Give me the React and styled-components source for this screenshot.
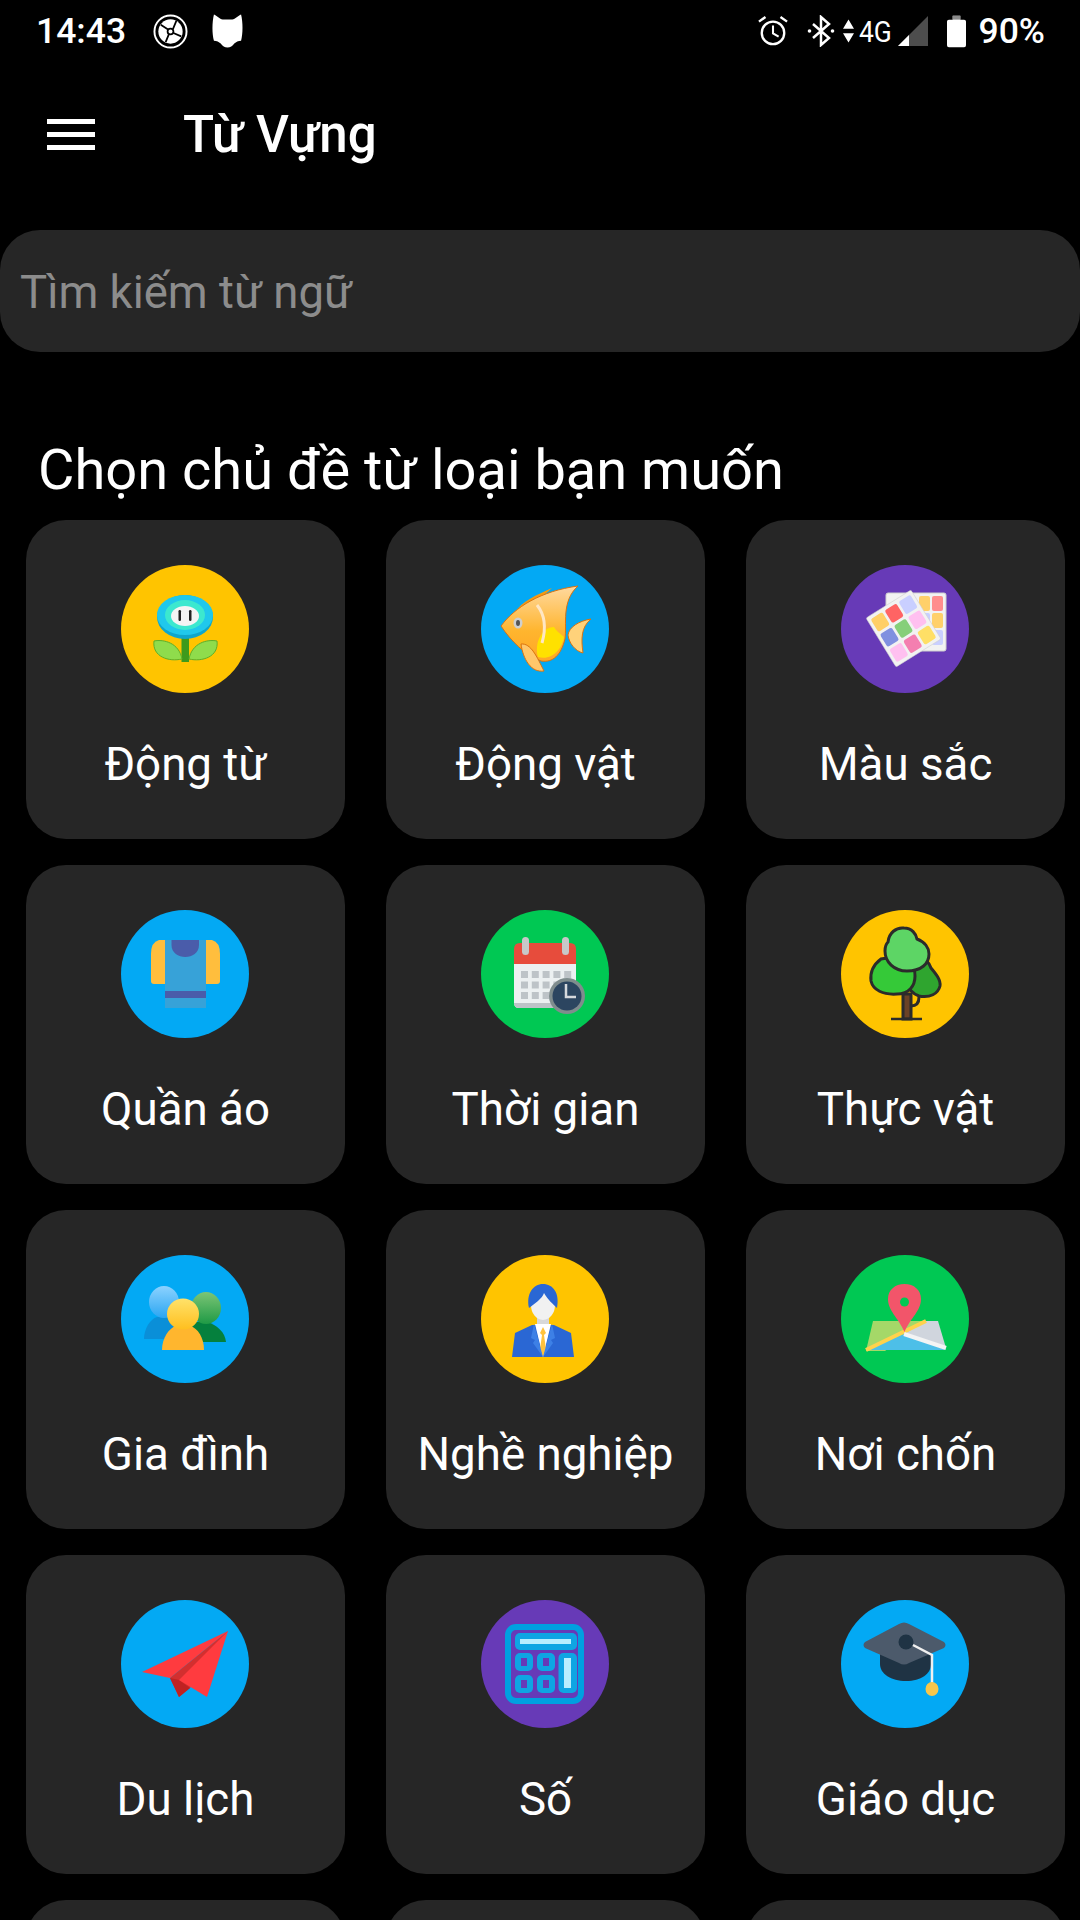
import styled, { createGlobalStyle } from "styled-components";

const GlobalStyle = createGlobalStyle`
  html, body {
    margin: 0;
    padding: 0;
    background: #000;
  }
  * {
    box-sizing: border-box;
  }
`;

const Screen = styled.div`
  width: 1080px;
  height: 1920px;
  overflow: hidden;
  background: #000;
  color: #fff;
  font-family: Roboto, "Liberation Sans", sans-serif;
`;

const StatusBar = styled.div`
  height: 62px;
  display: flex;
  align-items: center;
  padding: 0 35px 0 36px;
`;

const StatusTime = styled.span`
  font-size: 35.5px;
  font-weight: 500;
  width: 117px;
`;

const StatusIcon = styled.span`
  display: flex;
  margin-left: ${(p) => p.$left || 0}px;
`;

const Spacer = styled.div`
  flex: 1;
`;

const NetworkLabel = styled.span`
  width: 33px;
  margin: 0 6px 0 5px;
  font-size: 30px;
  transform: scaleX(0.88);
  transform-origin: left center;
  white-space: nowrap;
`;

const BatteryLabel = styled.span`
  font-size: 35.5px;
  font-weight: 500;
  margin-left: 13px;
`;

const Toolbar = styled.div`
  height: 144px;
  display: flex;
  align-items: center;
  padding-left: 47px;
`;

const MenuIcon = styled.div`
  width: 48px;
  display: flex;
  flex-direction: column;
  gap: 8px;
  margin-right: 88px;

  span {
    height: 5px;
    background: #fff;
  }
`;

const Title = styled.h1`
  margin: 0;
  font-size: 51px;
  font-weight: 500;
`;

const SearchBox = styled.div`
  height: 122px;
  margin-top: 24px;
  padding: 3px 0 0 20px;
  display: flex;
  align-items: center;
  background: #262626;
  border-radius: 40px;
  color: #8c8c8c;
  font-size: 45.5px;
`;

const Heading = styled.h2`
  margin: 0;
  height: 168px;
  padding: 88px 0 0 38px;
  font-size: 56px;
  line-height: 61px;
  font-weight: 400;
`;

const CategoryGrid = styled.div`
  display: grid;
  grid-template-columns: repeat(3, 319px);
  grid-auto-rows: 319px;
  column-gap: 41px;
  row-gap: 26px;
  padding-left: 26px;
`;

const Card = styled.div`
  background: #262626;
  border-radius: 40px;
  padding-top: 45px;
  display: flex;
  flex-direction: column;
  align-items: center;
`;

const Circle = styled.div`
  width: 128px;
  height: 128px;
  margin-left: -1px;
  border-radius: 50%;
  background: ${(p) => p.$color};
  overflow: hidden;

  svg {
    display: block;
  }
`;

const Label = styled.span`
  margin-top: 47px;
  font-size: 45.7px;
  line-height: 50px;
  white-space: nowrap;
`;

const yellow = "#ffc400";
const blue = "#03a9f4";
const purple = "#673ab7";
const green = "#00c853";

const Flower = () => (
  <>
    <rect x="60.5" y="70" width="7.5" height="27" fill="#3e9a1c" />
    <path d="M33 76c10-2 25 2 28 18-13 3-30-2-28-18z" fill="#8fdc4c" stroke="#5dae2a" />
    <path d="M96 76c-10-2-25 2-28 18 13 3 30-2 28-18z" fill="#8fdc4c" stroke="#5dae2a" />
    <ellipse cx="64" cy="52" rx="28" ry="22" fill="#0fa6cc" />
    <ellipse cx="64" cy="50" rx="28" ry="20" fill="#20c8ec" />
    <ellipse cx="64" cy="50" rx="20" ry="15" fill="#3ce8cf" />
    <ellipse cx="64" cy="51" rx="14" ry="10" fill="#f4f4f4" />
    <rect x="57.5" y="45" width="2.5" height="11" rx="1.2" fill="#222" />
    <rect x="68" y="45" width="2.5" height="11" rx="1.2" fill="#222" />
  </>
);

const Fish = () => (
  <>
    <defs>
      <linearGradient id="fishBody" x1="0" y1="0" x2="0" y2="1">
        <stop offset="0" stopColor="#ffd9a0" />
        <stop offset="0.6" stopColor="#ffb52e" />
        <stop offset="1" stopColor="#ffa726" />
      </linearGradient>
    </defs>
    <path d="M34 48c6-12 22-18 37-25-9 9-21 15-25 21z" fill="#f59a12" />
    <path d="M87 70c1-8 11-14 23-16-10 8-10 20-8 34-8-2-14-10-15-18z" fill="#ffd27a" stroke="#d9730f" />
    <path d="M20 61C34 42 60 26 97 21 80 36 86 60 84 74c-4 16-12 24-24 22C44 90 30 76 20 61z" fill="url(#fishBody)" stroke="#d9730f" />
    <path d="M57 92c-4-14 4-30 16-30 2 4 8 8 10 10-2 12-12 24-26 20z" fill="#ffe100" />
    <path d="M56 40c8 10 9 24 5 38" fill="none" stroke="#ffe6c4" strokeWidth="3" />
    <path d="M40 79c10-1 16 13 23 27-13 2-21-12-23-27z" fill="#ffc76a" stroke="#d9730f" />
    <ellipse cx="37" cy="58" rx="4.5" ry="5.5" fill="#cfcfcf" />
    <ellipse cx="37" cy="58" rx="2" ry="3" fill="#555" />
  </>
);

const backColors = ["#ffd06a", "#ff8d8d", "#c9cfff", "#ffd06a", "#ffc6f2", "#c9cfff"];
const frontColors = ["#ffcf66", "#ff6464", "#c9cfff", "#8090e0", "#86cf7a", "#ffc0f0", "#ffc0f0", "#f47fb0", "#ffdf66"];

const Swatches = () => (
  <>
    <rect x="45" y="28" width="60" height="58" rx="2" fill="#f2f2f2" stroke="#cfcfcf" />
    {backColors.map((c, i) => (
      <rect key={i} x={78 + (i % 2) * 13} y={31 + Math.floor(i / 2) * 17} width="11" height="15" rx="2" fill={c} />
    ))}
    <g transform="matrix(0.45 -0.28 0.30 0.49 25 53)">
      <rect width="100" height="100" rx="3" fill="#f2f2f2" stroke="#cfcfcf" />
      {frontColors.map((c, i) => (
        <rect key={i} x={6 + (i % 3) * 31} y={6 + Math.floor(i / 3) * 31} width="26" height="26" rx="4" fill={c} />
      ))}
    </g>
  </>
);

const Sweater = () => (
  <>
    <path d="M44 30H38q-8 2-8 14v27q0 3 3 3h63q3 0 3-3V44q0-12-8-14H44z" fill="#ffbe3d" />
    <rect x="44" y="30" width="41" height="68" fill="#37a2d8" />
    <path d="M50.5 30H78v5c0 16-27.5 16-27.5 0z" fill="#4a5caa" />
    <rect x="44" y="81" width="41" height="7" fill="#4a5caa" />
  </>
);

const calendarCells = [0, 1, 2].flatMap((row) => [0, 1, 2, 3, 4].map((col) => [col, row]));

const Calendar = () => (
  <>
    <path d="M33 54h62v39q0 5-5 5H38q-5 0-5-5z" fill="#ecf0f1" />
    <path d="M33 93h62q0 5-5 5H38q-5 0-5-5z" fill="#bdc3c7" />
    <path d="M33 54V39q0-6 6-6h50q6 0 6 6v15z" fill="#e74c3c" />
    <rect x="41" y="27" width="7" height="18" rx="3.5" fill="#c8c8c8" />
    <rect x="81" y="27" width="7" height="18" rx="3.5" fill="#c8c8c8" />
    {calendarCells.map(([col, row]) => (
      <rect key={`${col}-${row}`} x={40 + col * 10.8} y={61 + row * 10.5} width="7" height="7" fill="#bdc3c7" />
    ))}
    <circle cx="86" cy="86" r="18" fill="#7f8c8d" />
    <circle cx="86" cy="86" r="14.5" fill="#2c4560" />
    <path d="M85 74v13h10" fill="none" stroke="#d5d8dc" strokeWidth="2.5" />
  </>
);

const Tree = () => (
  <g stroke="#2b2b2b" strokeWidth="3">
    <path d="M62 84h8v25h-8z" fill="#6b4226" />
    <path d="M70 96c6 0 8-4 8-9" fill="none" />
    <path d="M50 109h31" strokeWidth="2.5" />
    <path d="M68 52c6-6 18-6 22 6 5 6 10 12 9 18-2 8-10 12-21 10-6-2-12-8-12-14z" fill="#2fa52f" />
    <path d="M40 49c-8 6-11 14-10 22 2 9 12 14 26 13 12 0 18-8 18-18 0-10-6-18-14-20z" fill="#35c938" />
    <path d="M47 32c1-9 8-15 16-14 8 0 12 6 13 11 8 3 12 9 12 15 0 10-8 17-22 17-13 0-22-9-22-20 0-3 1-7 3-9z" fill="#5dd565" />
  </g>
);

const Family = () => (
  <>
    <defs>
      <linearGradient id="famBlue" x1="0" y1="0" x2="0" y2="1">
        <stop offset="0" stopColor="#8cd2ff" />
        <stop offset="1" stopColor="#2ba6f2" />
      </linearGradient>
      <linearGradient id="famGreen" x1="0" y1="0" x2="0" y2="1">
        <stop offset="0" stopColor="#7cc576" />
        <stop offset="1" stopColor="#1f9a45" />
      </linearGradient>
      <linearGradient id="famYellow" x1="0" y1="0" x2="0" y2="1">
        <stop offset="0" stopColor="#ffe26a" />
        <stop offset="1" stopColor="#ffbf1f" />
      </linearGradient>
    </defs>
    <path d="M23 84c0-10 6-20 13-22h14c7 2 11 12 11 22z" fill="#0a8fd8" />
    <ellipse cx="43" cy="47" rx="15" ry="16" fill="url(#famBlue)" />
    <path d="M66 87V70l7-3h13c10 3 18 10 19 20z" fill="#05803d" />
    <ellipse cx="85" cy="53" rx="15" ry="16" fill="url(#famGreen)" />
    <path d="M41 95c0-12 7-22 14-24h14c8 2 14 12 14 24z" fill="#ffb62e" />
    <ellipse cx="62" cy="59" rx="16" ry="15.5" fill="url(#famYellow)" />
  </>
);

const Worker = () => (
  <>
    <rect x="56" y="56" width="12" height="18" fill="#d8d8d8" />
    <path d="M31 102l3-24 17-8h22l17 8 3 24z" fill="#2a67d4" />
    <path d="M54 69l8 33 8-33z" fill="#fff" />
    <path d="M62 72l3 6-2 2 2 14-3 8-3-8 2-14-2-2z" fill="#ffc23d" />
    <path d="M53 69l9 33-10-14 2-3-4-2z" fill="#3d80e6" />
    <path d="M71 69l-9 33 10-14-2-3 4-2z" fill="#3d80e6" />
    <ellipse cx="62" cy="50" rx="12" ry="15" fill="#f1f1f1" />
    <path d="M48 53c-3-14 4-24 14-24s17 9 14 24c-4-4-9-8-13-15-2 6-9 10-15 15z" fill="#2a67d4" />
  </>
);

const MapPin = () => (
  <>
    <path d="M25 96l7-30h53L44 96z" fill="#a5d868" />
    <path d="M85 66h12l8 27-42-14z" fill="#d0d5dd" />
    <path d="M63 79l42 16H25z" fill="#4dbfe8" />
    <path d="M25 95l60-29" stroke="#ffd24c" strokeWidth="4" fill="none" />
    <path d="M63 79l42 14" stroke="#f4f4f4" strokeWidth="4" fill="none" />
    <path d="M63.5 77C57 62 47 56 47 44c0-9 7-15 16.5-15S80 35 80 44c0 12-10 18-16.5 33z" fill="#f2556a" />
    <circle cx="63.5" cy="47" r="4.5" fill={green} />
  </>
);

const Plane = () => (
  <>
    <path d="M107 31L21 72l28 6z" fill="#ff3b3f" />
    <path d="M107 31L49 78l9 19 11-9z" fill="#d32f2f" />
    <path d="M49 78l9 19 11-9-11-8z" fill="#bf2222" />
    <path d="M107 31L58 80l28 17z" fill="#ff3b3f" />
  </>
);

const calcKeys = [
  [34, 53],
  [56, 53],
  [34, 75],
  [56, 75],
];

const Calculator = () => (
  <>
    <rect x="27" y="27" width="73" height="74" rx="8" fill="none" stroke="#00a0e0" strokeWidth="6" />
    <rect x="34" y="33" width="62" height="17" rx="5" fill="#0ea5e3" />
    <rect x="39" y="39" width="51" height="5" fill="#b8eeff" />
    {calcKeys.map(([x, y]) => (
      <g key={`${x}-${y}`}>
        <rect x={x} y={y} width="18" height="18" rx="5" fill="#0ea5e3" />
        <rect x={x + 6} y={y + 5} width="6" height="8" fill={purple} />
      </g>
    ))}
    <rect x="77.5" y="53" width="18.5" height="40" rx="5" fill="#0ea5e3" />
    <rect x="83" y="58" width="7" height="30" fill="#b8eeff" />
  </>
);

const GradCap = () => (
  <>
    <path d="M39 50h51v14c0 10-10 17-25 17s-26-7-26-17z" fill="#1f3344" />
    <path d="M58 24q5-3 10 0l35 18q3 3 0 6L68 63q-5 3-10 0L24 48q-3-3 0-6z" fill="#4c5a6b" />
    <circle cx="65" cy="42" r="7.5" fill="#1f3344" />
    <path d="M72 45l19 10v28" fill="none" stroke="#f0f0f0" strokeWidth="2.5" />
    <ellipse cx="91" cy="89" rx="6.5" ry="7" fill="#f8c64a" />
  </>
);

const categories = [
  { name: "Động từ", color: yellow, Icon: Flower },
  { name: "Động vật", color: blue, Icon: Fish },
  { name: "Màu sắc", color: purple, Icon: Swatches },
  { name: "Quần áo", color: blue, Icon: Sweater },
  { name: "Thời gian", color: green, Icon: Calendar },
  { name: "Thực vật", color: yellow, Icon: Tree },
  { name: "Gia đình", color: blue, Icon: Family },
  { name: "Nghề nghiệp", color: yellow, Icon: Worker },
  { name: "Nơi chốn", color: green, Icon: MapPin },
  { name: "Du lịch", color: blue, Icon: Plane },
  { name: "Số", color: purple, Icon: Calculator },
  { name: "Giáo dục", color: blue, Icon: GradCap },
];

const WheelIcon = () => (
  <svg width="35" height="35" viewBox="0 0 36 36">
    <circle cx="18" cy="18" r="16.5" fill="none" stroke="#fff" strokeWidth="2" />
    <circle cx="18" cy="18" r="12.5" fill="#fff" />
    <g stroke="#000" strokeWidth="1.8" fill="none">
      <circle cx="18" cy="18" r="3" />
      <path d="M15.5 16L8 11M20.5 15.5L24 7M21 19.5L29 23M16.5 20.5L13 29" />
    </g>
  </svg>
);

const CatIcon = () => (
  <svg width="31" height="36" viewBox="0 0 32 36">
    <path d="M2 1c3 1 6 5 9 5h10c3 0 6-4 9-5 2 8 2 20 0 27-3 0-5 1-7 3-2 3-4 4-7 4s-5-1-7-4c-2-2-4-3-7-3C0 21 0 9 2 1z" fill="#fff" />
  </svg>
);

const AlarmIcon = () => (
  <svg width="30" height="32" viewBox="0 0 32 34">
    <circle cx="16" cy="19" r="12" fill="none" stroke="#fff" strokeWidth="2.5" />
    <path d="M16 11v8.5l6 3.5" fill="none" stroke="#fff" strokeWidth="2.2" />
    <path d="M1 7l7-5M31 7l-7-5" stroke="#fff" strokeWidth="2.5" />
  </svg>
);

const BluetoothIcon = () => (
  <svg width="28" height="32" viewBox="0 0 28 32">
    <path d="M6 9l16 14-8 7V2l8 7L6 23" fill="none" stroke="#fff" strokeWidth="2.5" />
    <circle cx="2.5" cy="16" r="1.8" fill="#fff" />
    <circle cx="25.5" cy="16" r="1.8" fill="#fff" />
  </svg>
);

const ArrowsIcon = () => (
  <svg width="11" height="25" viewBox="0 0 12 26">
    <path d="M6 0l6 10H0zM0 15h12l-6 10z" fill="#fff" />
  </svg>
);

const SignalIcon = () => (
  <svg width="30" height="30" viewBox="0 0 30 30">
    <path d="M30 0v30H0z" fill="#4d4d4d" />
    <path d="M11 19v11H0z" fill="#fff" />
  </svg>
);

const BatteryIcon = () => (
  <svg width="19" height="33" viewBox="0 0 20 33">
    <path d="M6 0h8v4h4q2 0 2 2v25q0 2-2 2H2q-2 0-2-2V6q0-2 2-2h4z" fill="#fff" />
    <path d="M6 0h8v4H6z" fill="#8a8a8a" />
  </svg>
);

const App = () => {
  return (
    <Screen>
      <GlobalStyle />
      <StatusBar>
        <StatusTime>14:43</StatusTime>
        <WheelIcon />
        <StatusIcon $left={24}>
          <CatIcon />
        </StatusIcon>
        <Spacer />
        <AlarmIcon />
        <StatusIcon $left={19}>
          <BluetoothIcon />
        </StatusIcon>
        <StatusIcon $left={8}>
          <ArrowsIcon />
        </StatusIcon>
        <NetworkLabel>4G</NetworkLabel>
        <SignalIcon />
        <StatusIcon $left={19}>
          <BatteryIcon />
        </StatusIcon>
        <BatteryLabel>90%</BatteryLabel>
      </StatusBar>
      <Toolbar>
        <MenuIcon>
          <span />
          <span />
          <span />
        </MenuIcon>
        <Title>Từ Vựng</Title>
      </Toolbar>
      <SearchBox>Tìm kiếm từ ngữ</SearchBox>
      <Heading>Chọn chủ đề từ loại bạn muốn</Heading>
      <CategoryGrid>
        {categories.map(({ name, color, Icon }) => (
          <Card key={name}>
            <Circle $color={color}>
              <svg width="128" height="128" viewBox="0 0 128 128">
                <Icon />
              </svg>
            </Circle>
            <Label>{name}</Label>
          </Card>
        ))}
        <Card />
        <Card />
        <Card />
      </CategoryGrid>
    </Screen>
  );
};

export default App;
